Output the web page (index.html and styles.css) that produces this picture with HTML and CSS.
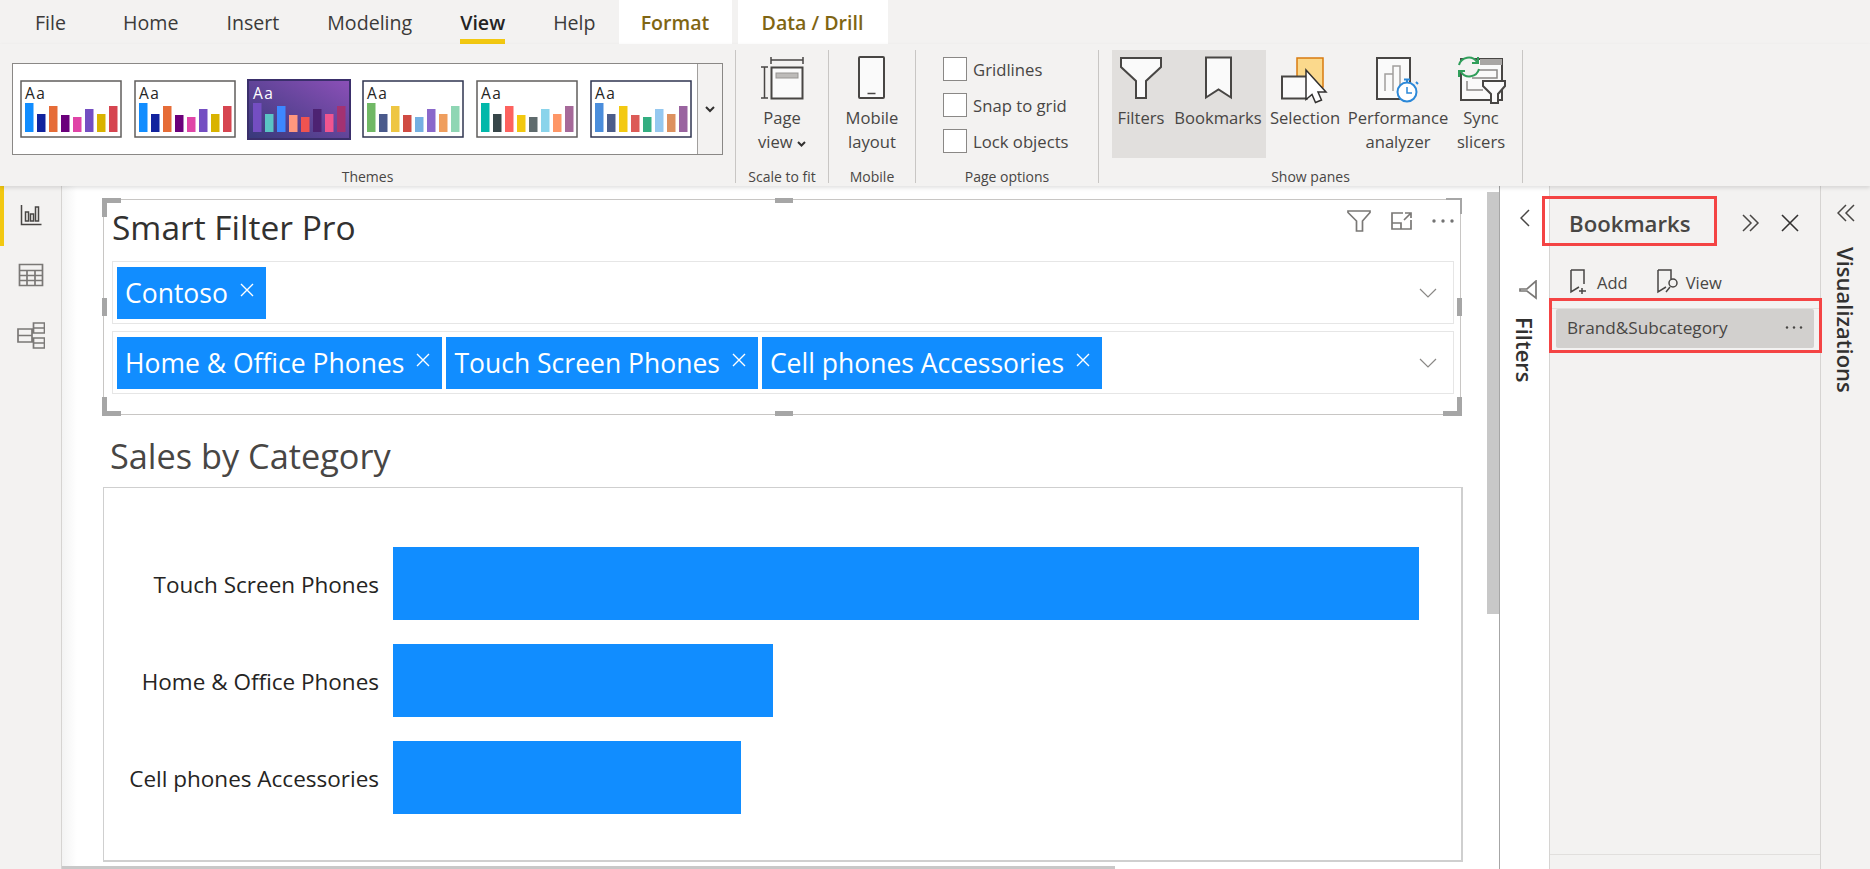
FILE: index.html
```html
<!DOCTYPE html>
<html lang="en">
<head>
    <meta charset="UTF-8">
    <title>Power BI Desktop - View</title>
    <link rel="stylesheet" href="styles.css">
</head>
<body>
    <!-- Ribbon tabs -->
    <nav class="tabs">
        <span class="tab tab-file">File</span>
        <span class="tab">Home</span>
        <span class="tab">Insert</span>
        <span class="tab">Modeling</span>
        <span class="tab tab-active">View</span>
        <span class="tab">Help</span>
        <span class="tab tab-context tab-format">Format</span>
        <span class="tab tab-context tab-data">Data / Drill</span>
    </nav>

    <!-- Ribbon -->
    <header class="ribbon">
        <section class="group group-themes">
            <div class="group-body">
                <div class="theme-box">
                    <div class="theme-list">
                        <svg class="theme" viewBox="0 0 102 58">
                            <rect class="theme-frame" x="1" y="1" width="100" height="56"/>
                            <text class="theme-aa" x="5" y="19">Aa</text>
                            <rect x="5" y="23" width="8.5" height="29" fill="#118dff"/><rect x="17" y="34" width="8.5" height="18" fill="#12239e"/><rect x="29" y="26" width="8.5" height="26" fill="#e66c37"/><rect x="41" y="35" width="8.5" height="17" fill="#6b007b"/><rect x="53" y="37" width="8.5" height="15" fill="#e044a7"/><rect x="65" y="29" width="8.5" height="23" fill="#744ec2"/><rect x="77" y="34" width="8.5" height="18" fill="#d9b300"/><rect x="89" y="26" width="8.5" height="26" fill="#d64550"/>
                        </svg>
                        <svg class="theme" viewBox="0 0 102 58">
                            <rect class="theme-frame" x="1" y="1" width="100" height="56"/>
                            <text class="theme-aa" x="5" y="19">Aa</text>
                            <rect x="5" y="23" width="8.5" height="29" fill="#118dff"/><rect x="17" y="34" width="8.5" height="18" fill="#12239e"/><rect x="29" y="26" width="8.5" height="26" fill="#e66c37"/><rect x="41" y="35" width="8.5" height="17" fill="#6b007b"/><rect x="53" y="37" width="8.5" height="15" fill="#e044a7"/><rect x="65" y="29" width="8.5" height="23" fill="#744ec2"/><rect x="77" y="34" width="8.5" height="18" fill="#d9b300"/><rect x="89" y="26" width="8.5" height="26" fill="#d64550"/>
                        </svg>
                        <svg class="theme" viewBox="0 0 102 58">
                            <defs>
                                <linearGradient id="purple" x1="0" y1="1" x2="1" y2="0">
                                    <stop offset="0" stop-color="#37397a"/>
                                    <stop offset="1" stop-color="#8c50b8"/>
                                </linearGradient>
                            </defs>
                            <rect x="0" y="0" width="102" height="59" fill="url(#purple)" stroke="#3a2f6b" stroke-width="2"/>
                            <text class="theme-aa theme-aa-light" x="5" y="19">Aa</text>
                            <rect x="5" y="23" width="8.5" height="29" fill="#744ec2"/><rect x="17" y="34" width="8.5" height="18" fill="#5ac4c4"/><rect x="29" y="26" width="8.5" height="26" fill="#3d87ff"/><rect x="41" y="35" width="8.5" height="17" fill="#ff977e"/><rect x="53" y="37" width="8.5" height="15" fill="#ef5350"/><rect x="65" y="29" width="8.5" height="23" fill="#4d2272"/><rect x="77" y="34" width="8.5" height="18" fill="#f0558f"/><rect x="89" y="26" width="8.5" height="26" fill="#a33272"/>
                        </svg>
                        <svg class="theme" viewBox="0 0 102 58">
                            <rect class="theme-frame theme-frame-navy" x="1" y="1" width="100" height="56"/>
                            <text class="theme-aa" x="5" y="19">Aa</text>
                            <rect x="5" y="23" width="8.5" height="29" fill="#70b865"/><rect x="17" y="34" width="8.5" height="18" fill="#4a5a8c"/><rect x="29" y="26" width="8.5" height="26" fill="#eec643"/><rect x="41" y="35" width="8.5" height="17" fill="#d04b43"/><rect x="53" y="37" width="8.5" height="15" fill="#74b0e2"/><rect x="65" y="29" width="8.5" height="23" fill="#8a68cb"/><rect x="77" y="34" width="8.5" height="18" fill="#ef9e5e"/><rect x="89" y="26" width="8.5" height="26" fill="#8fd6b4"/>
                        </svg>
                        <svg class="theme" viewBox="0 0 102 58">
                            <rect class="theme-frame" x="1" y="1" width="100" height="56"/>
                            <text class="theme-aa" x="5" y="19">Aa</text>
                            <rect x="5" y="23" width="8.5" height="29" fill="#01b8aa"/><rect x="17" y="34" width="8.5" height="18" fill="#374649"/><rect x="29" y="26" width="8.5" height="26" fill="#fd625e"/><rect x="41" y="35" width="8.5" height="17" fill="#f2c80f"/><rect x="53" y="37" width="8.5" height="15" fill="#5f6b6d"/><rect x="65" y="29" width="8.5" height="23" fill="#8ad4eb"/><rect x="77" y="34" width="8.5" height="18" fill="#fe9666"/><rect x="89" y="26" width="8.5" height="26" fill="#a66999"/>
                        </svg>
                        <svg class="theme" viewBox="0 0 102 58">
                            <rect class="theme-frame theme-frame-navy" x="1" y="1" width="100" height="56"/>
                            <text class="theme-aa" x="5" y="19">Aa</text>
                            <rect x="5" y="23" width="8.5" height="29" fill="#4a8ddc"/><rect x="17" y="34" width="8.5" height="18" fill="#4c5d8a"/><rect x="29" y="26" width="8.5" height="26" fill="#f3c911"/><rect x="41" y="35" width="8.5" height="17" fill="#dc5b57"/><rect x="53" y="37" width="8.5" height="15" fill="#33ae81"/><rect x="65" y="29" width="8.5" height="23" fill="#95c8f0"/><rect x="77" y="34" width="8.5" height="18" fill="#dd915f"/><rect x="89" y="26" width="8.5" height="26" fill="#9a64a0"/>
                        </svg>
                    </div>
                    <div class="theme-more">
                        <svg width="10" height="7" viewBox="0 0 10 7"><path class="line-bold" d="M1 1l4 4 4-4"/></svg>
                    </div>
                </div>
            </div>
            <div class="group-label">Themes</div>
        </section>

        <section class="group group-scale">
            <div class="group-body group-center">
                <div class="big-btn">
                    <svg class="big-icon" width="44" height="44" viewBox="0 0 44 44">
                        <path class="line" d="M11 4h32M11 1v7M43 1v7M1 11h7M1 42h7M4.500 11v31"/>
                        <rect class="shape" x="11.500" y="11.500" width="31" height="31"/>
                        <rect x="16" y="17" width="22" height="5" fill="#bdbbb9" stroke="#979593"/>
                    </svg>
                    <span>Page</span>
                    <span>view <svg class="caret" width="9" height="6" viewBox="0 0 9 6"><path class="line-bold" d="M1 1l3.500 3.500L8 1"/></svg></span>
                </div>
            </div>
            <div class="group-label">Scale to fit</div>
        </section>

        <section class="group group-mobile">
            <div class="group-body group-center">
                <div class="big-btn">
                    <svg class="big-icon" width="27" height="44" viewBox="0 0 27 44">
                        <rect class="shape" x="1" y="1" width="25" height="41" rx="1"/>
                        <path class="line" d="M9.500 37.500h8"/>
                    </svg>
                    <span>Mobile</span>
                    <span>layout</span>
                </div>
            </div>
            <div class="group-label">Mobile</div>
        </section>

        <section class="group group-options">
            <div class="group-body options">
                <label class="option"><span class="check"></span>Gridlines</label>
                <label class="option"><span class="check"></span>Snap to grid</label>
                <label class="option"><span class="check"></span>Lock objects</label>
            </div>
            <div class="group-label">Page options</div>
        </section>

        <section class="group group-panes">
            <div class="group-body panes">
                <div class="panes-on">
                    <div class="big-btn btn-filters">
                        <svg class="big-icon" width="44" height="44" viewBox="0 0 44 44">
                            <path class="shape" d="M2 2h40v9L27 25v17H17V25L2 11z"/>
                        </svg>
                        <span>Filters</span>
                    </div>
                    <div class="big-btn btn-bookmarks">
                        <svg class="big-icon" width="27" height="44" viewBox="0 0 27 44">
                            <path class="shape" d="M1 1.500h25v40l-12.500-8L1 41.500z"/>
                        </svg>
                        <span>Bookmarks</span>
                    </div>
                </div>
                <div class="big-btn btn-selection">
                    <svg class="big-icon" width="48" height="44" viewBox="0 0 48 44">
                        <rect x="16" y="2" width="26" height="29" fill="#fbd98c" stroke="#d97b0f" stroke-width="1.500"/>
                        <rect class="shape" x="1" y="20.500" width="25" height="22"/>
                        <path d="M25 14l20 22h-8l3.500 8-6 2.500-3.500-8-6 5z" fill="#fff" stroke="#323130" stroke-width="1.500"/>
                    </svg>
                    <span>Selection</span>
                </div>
                <div class="big-btn btn-perf">
                    <svg class="big-icon" width="46" height="44" viewBox="0 0 46 44">
                        <rect class="shape" x="2" y="2" width="33" height="41"/>
                        <path d="M10 35V18h8v17M18 35V10h7v25" fill="none" stroke="#a19f9d" stroke-width="1.500"/>
                        <circle cx="32" cy="36" r="9.500" fill="#fff" stroke="#2b88d8" stroke-width="2"/>
                        <path d="M29 23.500h6M32 24v2.500M41 26l2 2" fill="none" stroke="#2b88d8" stroke-width="2"/>
                        <path d="M32 31v6h5" fill="none" stroke="#2b88d8" stroke-width="1.500"/>
                    </svg>
                    <span>Performance</span>
                    <span>analyzer</span>
                </div>
                <div class="big-btn btn-sync">
                    <svg class="big-icon" width="50" height="44" viewBox="0 0 50 44">
                        <rect class="shape" x="5" y="3" width="41" height="41"/>
                        <rect x="24" y="3" width="22" height="6" fill="#a8a6a4"/>
                        <path d="M23 14h18v8H16M11 25v9h16" fill="none" stroke="#8a8886" stroke-width="1.500"/>
                        <circle cx="13" cy="11" r="10" fill="#f3f2f1"/>
                        <path d="M3 9a10 10 0 0 1 18-3M23 13a10 10 0 0 1-18 3" fill="none" stroke="#2f9e5a" stroke-width="2"/>
                        <path d="M22 1v6h-6M3 21v-6h6" fill="none" stroke="#2f9e5a" stroke-width="2"/>
                        <path class="shape" d="M27 25h22v5l-7 8v9h-7v-9l-8-8z"/>
                    </svg>
                    <span>Sync</span>
                    <span>slicers</span>
                </div>
            </div>
            <div class="group-label">Show panes</div>
        </section>
    </header>

    <main class="workspace">
        <!-- Left views -->
        <aside class="views">
            <div class="view view-active">
                <svg width="22" height="22" viewBox="0 0 22 22">
                    <path class="line" d="M1.500 1v19.500h20M5.500 17V8h3v9zM10.500 17V10h3v7zM15.500 17V3h3v14z"/>
                </svg>
            </div>
            <div class="view">
                <svg width="26" height="24" viewBox="0 0 26 24">
                    <path class="line-grey" d="M1.500 1.500h23v21h-23zM1.500 7.500h23M1.500 12.500h23M1.500 17.500h23M9 7.500v15M17 7.500v15"/>
                </svg>
            </div>
            <div class="view">
                <svg width="28" height="27" viewBox="0 0 28 27">
                    <path class="line-grey" d="M16.500 1h11v10h-11zM16.500 6h11M1 7h14v13H1zM1 13.500h14M16.500 16h11v10h-11zM16.500 21h11"/>
                </svg>
            </div>
        </aside>

        <!-- Report canvas -->
        <div class="canvas">
            <div class="page">
                <section class="visual">
                    <h2 class="visual-title">Smart Filter Pro</h2>
                    <div class="visual-tools">
                        <svg width="24" height="22" viewBox="0 0 24 22"><path class="line-grey" d="M1 1h22v1.500L15.500 11v10h-6V11L1 2.500z"/></svg>
                        <svg width="21" height="18" viewBox="0 0 21 18"><path class="line-grey" d="M12 1H1v16h19V8M1 11h9v6M14 1h6v5M20 1l-7 7"/></svg>
                        <svg width="22" height="4" viewBox="0 0 22 4"><circle cx="2" cy="2" r="1.700" fill="#737373"/><circle cx="11" cy="2" r="1.700" fill="#737373"/><circle cx="20" cy="2" r="1.700" fill="#737373"/></svg>
                    </div>
                    <div class="slicer">
                        <span class="chip">Contoso<svg class="chip-x" width="14" height="14" viewBox="0 0 14 14"><path d="M1 1l12 12M13 1L1 13"/></svg></span>
                        <svg class="slicer-caret" width="18" height="10" viewBox="0 0 18 10"><path d="M1 1l8 8 8-8"/></svg>
                    </div>
                    <div class="slicer">
                        <span class="chip">Home &amp; Office Phones<svg class="chip-x" width="14" height="14" viewBox="0 0 14 14"><path d="M1 1l12 12M13 1L1 13"/></svg></span>
                        <span class="chip">Touch Screen Phones<svg class="chip-x" width="14" height="14" viewBox="0 0 14 14"><path d="M1 1l12 12M13 1L1 13"/></svg></span>
                        <span class="chip">Cell phones Accessories<svg class="chip-x" width="14" height="14" viewBox="0 0 14 14"><path d="M1 1l12 12M13 1L1 13"/></svg></span>
                        <svg class="slicer-caret" width="18" height="10" viewBox="0 0 18 10"><path d="M1 1l8 8 8-8"/></svg>
                    </div>
                    <i class="corner corner-tl"></i>
                    <i class="corner corner-tr"></i>
                    <i class="corner corner-bl"></i>
                    <i class="corner corner-br"></i>
                    <i class="grip grip-top"></i>
                    <i class="grip grip-bottom"></i>
                    <i class="grip grip-left"></i>
                    <i class="grip grip-right"></i>
                </section>

                <h2 class="chart-title">Sales by Category</h2>
                <section class="chart">
                    <div class="chart-label">Touch Screen Phones</div>
                    <div class="chart-bar" style="width: 1026px"></div>
                    <div class="chart-label">Home &amp; Office Phones</div>
                    <div class="chart-bar" style="width: 380px"></div>
                    <div class="chart-label">Cell phones Accessories</div>
                    <div class="chart-bar" style="width: 348px"></div>
                </section>
            </div>
            <div class="scroll-v"></div>
            <div class="scroll-h"></div>
        </div>

        <!-- Filters pane (collapsed) -->
        <aside class="pane-filters">
            <svg class="pane-chevron" width="10" height="18" viewBox="0 0 10 18"><path class="line" d="M9 1L1 9l8 8"/></svg>
            <svg class="pane-funnel" width="18" height="20" viewBox="0 0 18 20"><path class="line-grey" d="M17 1v17L8 11H1v-2h7z"/></svg>
            <div class="vertical vertical-filters">Filters</div>
        </aside>

        <!-- Bookmarks pane -->
        <aside class="pane-bookmarks">
            <div class="pane-head">
                <h3 class="pane-title">Bookmarks</h3>
                <svg class="head-icon" width="18" height="18" viewBox="0 0 18 18"><path class="line" d="M1 1l8 8-8 8M8 1l8 8-8 8"/></svg>
                <svg class="head-icon head-close" width="18" height="18" viewBox="0 0 18 18"><path class="head-x" d="M1 1l16 16M17 1L1 17"/></svg>
            </div>
            <div class="pane-actions">
                <span class="pane-action">
                    <svg width="20" height="26" viewBox="0 0 20 26"><path class="line" d="M2 1h13v14M2 1v22l8-5M13 19v6M10 22h7"/></svg>Add
                </span>
                <span class="pane-action">
                    <svg width="22" height="26" viewBox="0 0 22 26"><path class="line" d="M2 1h13v9M2 1v22l8-5M10 23l4-5"/><circle class="line" cx="17" cy="14" r="4"/></svg>View
                </span>
            </div>
            <div class="bookmark-list">
                <div class="bookmark">
                    <span>Brand&amp;Subcategory</span>
                    <svg width="18" height="3" viewBox="0 0 18 3"><circle cx="2" cy="1.500" r="1.200" fill="#484644"/><circle cx="9" cy="1.500" r="1.200" fill="#484644"/><circle cx="16" cy="1.500" r="1.200" fill="#484644"/></svg>
                </div>
            </div>
            <div class="pane-foot"></div>
        </aside>

        <!-- Visualizations pane (collapsed) -->
        <aside class="pane-viz">
            <svg class="viz-chevron" width="18" height="18" viewBox="0 0 18 18"><path class="line" d="M9 1L1 9l8 8M17 1L9 9l8 8"/></svg>
            <div class="vertical">Visualizations</div>
        </aside>
    </main>

    <!-- Red callouts drawn over the screenshot -->
    <div class="callout callout-title"></div>
    <div class="callout callout-item"></div>
</body>
</html>
```

FILE: styles.css
```css
/* Page */
html, body {
    margin: 0;
    height: 100%;
}

body {
    position: relative;
    width: 1870px;
    height: 869px;
    overflow: hidden;
    background-color: #f3f2f1;
    color: #323130;
    font-family: "Open Sans", "Noto Sans", sans-serif;
    font-size: 16px;
}

/* Shared icon strokes */
.line, .line-bold, .line-grey, .shape {
    fill: none;
    stroke: #484644;
    stroke-width: 1.5;
}

.line-bold {
    stroke: #323130;
    stroke-width: 2;
}

.line-grey {
    stroke: #7a7876;
    stroke-width: 1.7;
}

.shape {
    fill: #fafafa;
    stroke: #484644;
    stroke-width: 2;
}

/* Ribbon tabs */
.tabs {
    display: flex;
    height: 44px;
    padding-left: 35px;
}

.tab {
    position: relative;
    display: flex;
    align-items: center;
    margin-right: 48px;
    font-size: 19.6px;
    color: #3b3a39;
}

.tab-file {
    margin-right: 57px;
}

.tab-active {
    font-weight: 600;
    color: #252423;
}

.tab-active::after {
    content: "";
    position: absolute;
    left: 0;
    right: 0;
    bottom: 0;
    height: 5px;
    background-color: #f2c811;
}

.tab-context {
    font-weight: 600;
    color: #7f6513;
    background-color: #fff;
    justify-content: center;
}

.tab-format {
    width: 113px;
    margin-left: -25px;
    margin-right: 6px;
}

.tab-data {
    width: 150px;
}

/* Ribbon */
.ribbon {
    position: relative;
    z-index: 2;
    display: flex;
    height: 142px;
    box-sizing: border-box;
    padding-top: 6px;
    background-color: #f3f2f1;
    box-shadow: 0 2px 4px rgba(0, 0, 0, 0.12);
}

.group {
    display: flex;
    flex-direction: column;
    height: 133px;
    box-sizing: border-box;
    border-right: 1px solid #c8c6c4;
}

.group-body {
    height: 117px;
    flex-shrink: 0;
}

.group-center {
    display: flex;
    justify-content: center;
}

.group-label {
    height: 20px;
    line-height: 20px;
    font-size: 14px;
    text-align: center;
    color: #484644;
}

.group-themes { width: 736px; }
.group-scale { width: 93px; }
.group-mobile { width: 87px; }
.group-options { width: 183px; }
.group-panes { width: 424px; }

/* Themes gallery */
.theme-box {
    display: flex;
    width: 711px;
    height: 92px;
    margin: 13px 0 0 12px;
    box-sizing: border-box;
    border: 1px solid #8a8886;
    background-color: #fff;
}

.theme-list {
    display: flex;
    flex: 1;
    align-items: center;
    gap: 12px;
    padding-left: 7px;
}

.theme {
    width: 102px;
    height: 58px;
    overflow: visible;
}

.theme-frame {
    fill: #fff;
    stroke: #605e5c;
    stroke-width: 1.5;
}

.theme-frame-navy {
    stroke: #2f3550;
}

.theme-aa {
    font-size: 15.5px;
    letter-spacing: 1.5px;
    fill: #252423;
}

.theme-aa-light {
    fill: #fff;
}

.theme-more {
    display: flex;
    width: 24px;
    align-items: center;
    justify-content: center;
    border-left: 1px solid #a19f9d;
    background-color: #f3f2f1;
}

/* Large ribbon buttons */
.big-btn {
    display: flex;
    flex-direction: column;
    align-items: center;
    height: 108px;
    line-height: 24px;
    font-size: 16.6px;
    color: #484644;
}

.big-icon {
    height: 44px;
    margin-top: 6px;
    margin-bottom: 6px;
    flex-shrink: 0;
    overflow: visible;
}

.caret {
    vertical-align: 1px;
}

/* Page options */
.options {
    display: flex;
    flex-direction: column;
    gap: 12px;
    padding: 7px 0 0 27px;
    box-sizing: border-box;
}

.option {
    display: flex;
    align-items: center;
    gap: 6px;
    height: 24px;
    font-size: 16.7px;
    color: #484644;
}

.check {
    width: 24px;
    height: 24px;
    box-sizing: border-box;
    border: 1px solid #8a8886;
    background-color: #fff;
}

/* Show panes */
.panes {
    display: flex;
    align-items: flex-start;
    padding-left: 13px;
}

.panes-on {
    display: flex;
    background-color: #e1dfdd;
}

.btn-filters { width: 58px; }
.btn-bookmarks { width: 96px; }
.btn-selection { width: 78px; }
.btn-perf { width: 108px; }
.btn-sync { width: 58px; }

/* Main area */
.workspace {
    display: flex;
    height: 683px;
}

.views {
    width: 61px;
    flex-shrink: 0;
    border-right: 1px solid #d6d4d2;
}

.view {
    display: flex;
    align-items: center;
    justify-content: center;
    height: 60px;
}

.view svg {
    margin-top: -2px;
}

.view-active {
    box-shadow: inset 4px 0 0 #f2c811;
}

.canvas {
    position: relative;
    width: 1438px;
    flex-shrink: 0;
    box-sizing: border-box;
    padding-left: 15px;
    border-right: 1px solid #a6a6a6;
    background: linear-gradient(to right, #f3f3f3, #fff 15px);
}

.page {
    width: 1411px;
    height: 100%;
    box-sizing: border-box;
    padding: 13px 0 0 26px;
    background-color: #fff;
}

.scroll-v {
    position: absolute;
    top: 6px;
    right: 0;
    width: 12px;
    height: 422px;
    background-color: #c8c8c8;
}

.scroll-h {
    position: absolute;
    left: 0;
    bottom: 0;
    width: 1053px;
    height: 3px;
    background-color: #c8c8c8;
}

/* Slicer visual */
.visual {
    position: relative;
    width: 1358px;
    height: 216px;
    box-sizing: border-box;
    padding: 0 6px 0 8px;
    border: 1px solid #c8c6c4;
}

.visual-title {
    height: 61px;
    margin: 0;
    line-height: 54px;
    font-size: 33.5px;
    font-weight: 400;
    color: #323130;
}

.visual-tools {
    position: absolute;
    top: 10px;
    right: 6px;
    display: flex;
    align-items: center;
    gap: 20px;
}

.slicer {
    display: flex;
    align-items: center;
    gap: 4px;
    height: 63px;
    box-sizing: border-box;
    margin-bottom: 7px;
    padding: 5px 4px 4px;
    border: 1px solid #e6e6e6;
}

.chip {
    display: flex;
    align-items: center;
    height: 52px;
    padding: 0 12px 0 8px;
    background-color: #118dff;
    color: #fff;
    font-size: 26.5px;
    white-space: nowrap;
}

.chip-x {
    margin: -6px 0 0 12px;
}

.chip-x path {
    fill: none;
    stroke: #fff;
    stroke-width: 1.4;
}

.slicer-caret {
    margin-left: auto;
    margin-right: 12px;
}

.slicer-caret path {
    fill: none;
    stroke: #8a8886;
    stroke-width: 1.2;
}

/* Selection handles */
.corner {
    position: absolute;
    width: 14px;
    height: 14px;
    border: 0 solid #a6a6a6;
}

.corner-tl { top: -2px; left: -2px; border-width: 5px 0 0 5px; }
.corner-tr { top: -2px; right: -2px; border-width: 2px 2px 0 0; }
.corner-bl { bottom: -2px; left: -2px; border-width: 0 0 5px 5px; }
.corner-br { bottom: -2px; right: -2px; border-width: 0 5px 5px 0; }

.grip {
    position: absolute;
    background-color: #a6a6a6;
}

.grip-top, .grip-bottom {
    left: 671px;
    width: 18px;
    height: 5px;
}

.grip-top { top: -2px; }
.grip-bottom { bottom: -2px; }

.grip-left, .grip-right {
    top: 98px;
    width: 5px;
    height: 18px;
}

.grip-left { left: -2px; }
.grip-right { right: -2px; }

/* Bar chart */
.chart-title {
    height: 60px;
    margin: 0;
    padding: 12px 0 0 7px;
    line-height: 58px;
    font-size: 34.3px;
    font-weight: 400;
    color: #484644;
}

.chart {
    display: grid;
    grid-template-columns: 275px 1fr;
    column-gap: 14px;
    row-gap: 24px;
    grid-auto-rows: 73px;
    width: 1360px;
    height: 375px;
    box-sizing: border-box;
    padding-top: 59px;
    border: 1px solid #cfcfcf;
    border-width: 1px 2px 2px 1px;
}

.chart-label {
    align-self: center;
    padding-top: 2px;
    text-align: right;
    font-size: 22.5px;
    color: #252423;
    white-space: nowrap;
}

.chart-bar {
    background-color: #118dff;
}

/* Collapsed filters pane */
.pane-filters {
    display: flex;
    flex-direction: column;
    align-items: center;
    width: 50px;
    flex-shrink: 0;
    box-sizing: border-box;
    padding-top: 23px;
    border-right: 1px solid #d6d4d2;
    background-color: #fff;
}

.pane-funnel {
    margin: 53px 0 0 6px;
}

.vertical {
    writing-mode: vertical-rl;
    font-size: 22px;
    font-weight: 600;
    color: #323130;
}

.vertical-filters {
    margin-top: 17px;
}

/* Bookmarks pane */
.pane-bookmarks {
    display: flex;
    flex-direction: column;
    width: 271px;
    flex-shrink: 0;
    box-sizing: border-box;
    border-right: 1px solid #d6d4d2;
}

.pane-head {
    display: flex;
    align-items: center;
    height: 72px;
    padding: 0 21px 0 19px;
}

.pane-title {
    flex: 1;
    margin: 0;
    padding-top: 2px;
    font-size: 22.2px;
    font-weight: 600;
    color: #484644;
}

.head-icon {
    margin-top: 1px;
}

.head-close {
    margin-left: 21px;
}

.head-x {
    fill: none;
    stroke: #323130;
    stroke-width: 1.6;
}

.pane-actions {
    display: flex;
    gap: 28px;
    align-items: center;
    height: 50px;
    padding: 0 0 2px 19px;
    box-sizing: border-box;
    font-size: 16.5px;
    color: #484644;
}

.pane-action {
    display: flex;
    align-items: center;
    gap: 8px;
}

.bookmark-list {
    flex: 1;
    padding: 0 6px;
    border-top: 1px solid #e1dfdd;
    border-bottom: 1px solid #e1dfdd;
}

.bookmark {
    display: flex;
    align-items: center;
    justify-content: space-between;
    height: 39px;
    box-sizing: border-box;
    padding: 0 11px 2px;
    border-radius: 2px;
    background-color: #d2d0ce;
    font-size: 17.2px;
    color: #484644;
}

.pane-foot {
    height: 14px;
}

/* Collapsed visualizations pane */
.pane-viz {
    display: flex;
    flex-direction: column;
    align-items: center;
    flex: 1;
    padding-top: 18px;
}

.viz-chevron {
    margin: 0 0 25px 0;
}

/* Red callouts */
.callout {
    position: absolute;
    box-sizing: border-box;
    border: 3px solid #f44444;
}

.callout-title {
    left: 1542px;
    top: 196px;
    width: 175px;
    height: 50px;
}

.callout-item {
    left: 1549px;
    top: 298px;
    width: 273px;
    height: 55px;
}
```
